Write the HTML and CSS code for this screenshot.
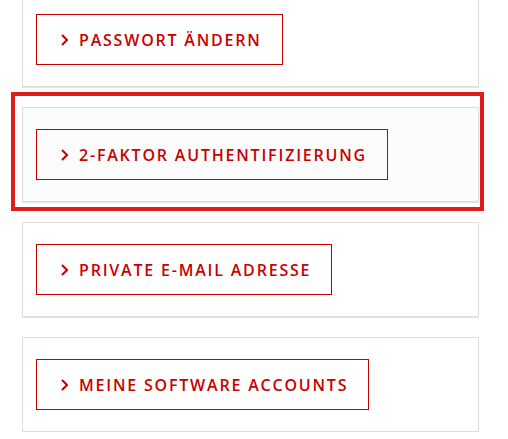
FILE: index.html
```html
<!DOCTYPE html>
<html lang="de">
<head>
<meta charset="utf-8">
<title>Konto</title>
<link rel="stylesheet" href="styles.css">
</head>
<body>
<div class="list">
  <div class="card">
    <a class="btn" href="#"><svg class="chev" viewBox="0 0 7 12" width="7" height="12"><path d="M1 1 L6 6 L1 11"/></svg><span>Passwort ändern</span></a>
  </div>
  <div class="card card--active">
    <a class="btn" href="#"><svg class="chev" viewBox="0 0 7 12" width="7" height="12"><path d="M1 1 L6 6 L1 11"/></svg><span>2-Faktor Authentifizierung</span></a>
    <div class="highlight"></div>
  </div>
  <div class="card">
    <a class="btn" href="#"><svg class="chev" viewBox="0 0 7 12" width="7" height="12"><path d="M1 1 L6 6 L1 11"/></svg><span>Private E-Mail Adresse</span></a>
  </div>
  <div class="card">
    <a class="btn" href="#"><svg class="chev" viewBox="0 0 7 12" width="7" height="12"><path d="M1 1 L6 6 L1 11"/></svg><span>Meine Software Accounts</span></a>
  </div>
</div>
</body>
</html>
```

FILE: styles.css
```css
html, body {
  margin: 0;
  padding: 0;
  background: #ffffff;
  overflow: hidden;
}
body {
  font-family: "Open Sans", "Liberation Sans", sans-serif;
}
.list {
  display: flex;
  flex-direction: column;
  gap: 20px;
  margin: -8px 0 0 22px;
  width: 457px;
}
.card {
  position: relative;
  border: 1px solid #dddddd;
  box-shadow: 0 1px 0 #e4e4e4;
  background: #ffffff;
  padding: 21px 13px;
  display: flex;
}
.card--active {
  background: #fcfcfc;
}
.btn {
  box-sizing: border-box;
  height: 51px;
  display: inline-flex;
  align-items: center;
  gap: 11px;
  padding: 0 20px 0 24px;
  border: 1px solid #c80000;
  color: #c80000;
  text-decoration: none;
  text-transform: uppercase;
  font-size: 16px;
  font-weight: 600;
  letter-spacing: 1.8px;
  white-space: nowrap;
}
.chev {
  flex: none;
  fill: none;
  stroke: currentColor;
  stroke-width: 2;
}
.highlight {
  position: absolute;
  top: -16px;
  left: -12px;
  right: -6px;
  bottom: -10px;
  border: 4px solid #e21c1c;
  pointer-events: none;
}
```
